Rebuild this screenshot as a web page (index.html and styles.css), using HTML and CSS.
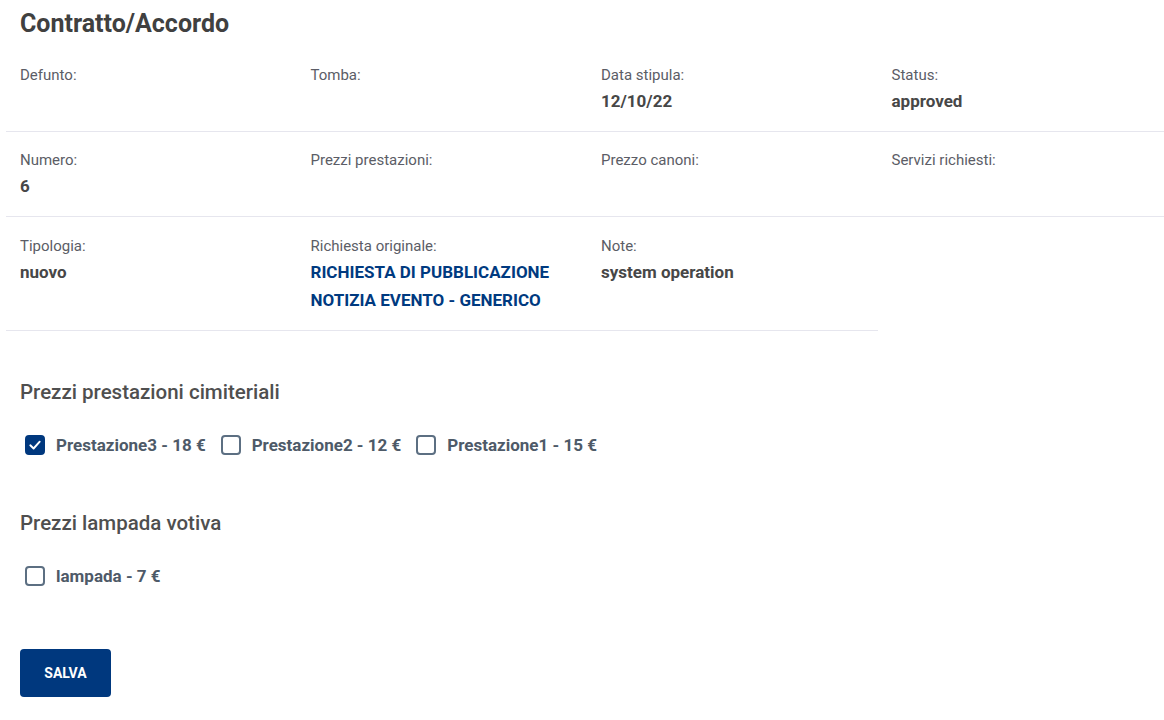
FILE: index.html
```html
<!DOCTYPE html>
<html lang="it">
<head>
<meta charset="utf-8">
<title>Contratto/Accordo</title>
<link rel="stylesheet" href="styles.css">
</head>
<body>
<main class="page">
  <h1 class="title">Contratto/Accordo</h1>
  <section class="details">
    <div class="row">
      <div class="cell"><div class="label">Defunto:</div></div>
      <div class="cell"><div class="label">Tomba:</div></div>
      <div class="cell"><div class="label">Data stipula:</div><div class="value">12/10/22</div></div>
      <div class="cell"><div class="label">Status:</div><div class="value">approved</div></div>
    </div>
    <div class="row">
      <div class="cell"><div class="label">Numero:</div><div class="value">6</div></div>
      <div class="cell"><div class="label">Prezzi prestazioni:</div></div>
      <div class="cell"><div class="label">Prezzo canoni:</div></div>
      <div class="cell"><div class="label">Servizi richiesti:</div></div>
    </div>
    <div class="row row-3">
      <div class="cell"><div class="label">Tipologia:</div><div class="value">nuovo</div></div>
      <div class="cell"><div class="label">Richiesta originale:</div><a class="value link" href="#">RICHIESTA DI PUBBLICAZIONE NOTIZIA EVENTO - GENERICO</a></div>
      <div class="cell"><div class="label">Note:</div><div class="value">system operation</div></div>
    </div>
  </section>

  <section class="group">
    <h2 class="group-title">Prezzi prestazioni cimiteriali</h2>
    <div class="checks">
      <label class="check"><span class="box checked"><svg viewBox="0 0 20 20" width="20" height="20"><path d="M5.3 10.3 L8.6 13.5 L14.7 6.7" fill="none" stroke="#fff" stroke-width="1.9" stroke-linecap="round" stroke-linejoin="round"/></svg></span><span class="check-text">Prestazione3 - 18 €</span></label>
      <label class="check"><span class="box"></span><span class="check-text">Prestazione2 - 12 €</span></label>
      <label class="check"><span class="box"></span><span class="check-text">Prestazione1 - 15 €</span></label>
    </div>
  </section>

  <section class="group">
    <h2 class="group-title">Prezzi lampada votiva</h2>
    <div class="checks">
      <label class="check"><span class="box"></span><span class="check-text">lampada - 7 €</span></label>
    </div>
  </section>

  <div class="actions">
    <button class="btn" type="button">SALVA</button>
  </div>
</main>
</body>
</html>
```

FILE: styles.css
```css
html, body {
  margin: 0;
  padding: 0;
  background: #ffffff;
  overflow-x: hidden;
}

body {
  font-family: Roboto, "Noto Sans", sans-serif;
  color: #4a4a4a;
}

.page {
  padding: 8px 0 0 6px;
  width: 1162px;
}

.title {
  margin: 0;
  padding: 0 14px;
  font-size: 25px;
  line-height: 32px;
  font-weight: 700;
  color: #404040;
  height: 39px;
}

.row {
  display: grid;
  grid-template-columns: repeat(4, 290.5px);
  border-bottom: 1px solid #e6e6ee;
}

.row-3 {
  grid-template-columns: repeat(3, 290.5px);
  width: 871.5px;
}

.cell {
  padding: 16px 14px;
}

.row-3 .cell {
  padding-top: 17px;
}

.label {
  font-size: 15px;
  line-height: 24px;
  color: #5b5d66;
}

.value {
  display: block;
  font-size: 17px;
  line-height: 28px;
  font-weight: 700;
  color: #474747;
  text-decoration: none;
}

.link {
  color: #003a80;
}

.group {
  padding: 0 14px;
}

.group-title {
  margin: 0;
  padding-top: 46px;
  font-size: 20.5px;
  line-height: 30px;
  font-weight: 500;
  color: #4f4f4f;
}

.checks {
  display: flex;
  padding-top: 23px;
  padding-bottom: 2px;
  height: 30px;
  align-items: center;
}

.check {
  display: flex;
  align-items: center;
  margin-right: 10px;
}

.box {
  box-sizing: border-box;
  width: 20px;
  height: 20px;
  margin-left: 5px;
  border: 2px solid #5c6f82;
  border-radius: 4px;
  display: flex;
  align-items: center;
  justify-content: center;
}

.box.checked {
  background: #00387e;
  border-color: #00387e;
}

.box svg {
  flex: none;
}

.check-text {
  margin-left: 11px;
  font-size: 17px;
  font-weight: 700;
  color: #4e5a68;
}

.actions {
  padding: 56px 14px 20px;
}

.btn {
  width: 91px;
  height: 48px;
  border: none;
  border-radius: 4px;
  background: #00387e;
  color: #ffffff;
  font-family: Roboto, "Noto Sans", sans-serif;
  font-size: 14px;
  font-weight: 700;
  padding: 0;
}
```
